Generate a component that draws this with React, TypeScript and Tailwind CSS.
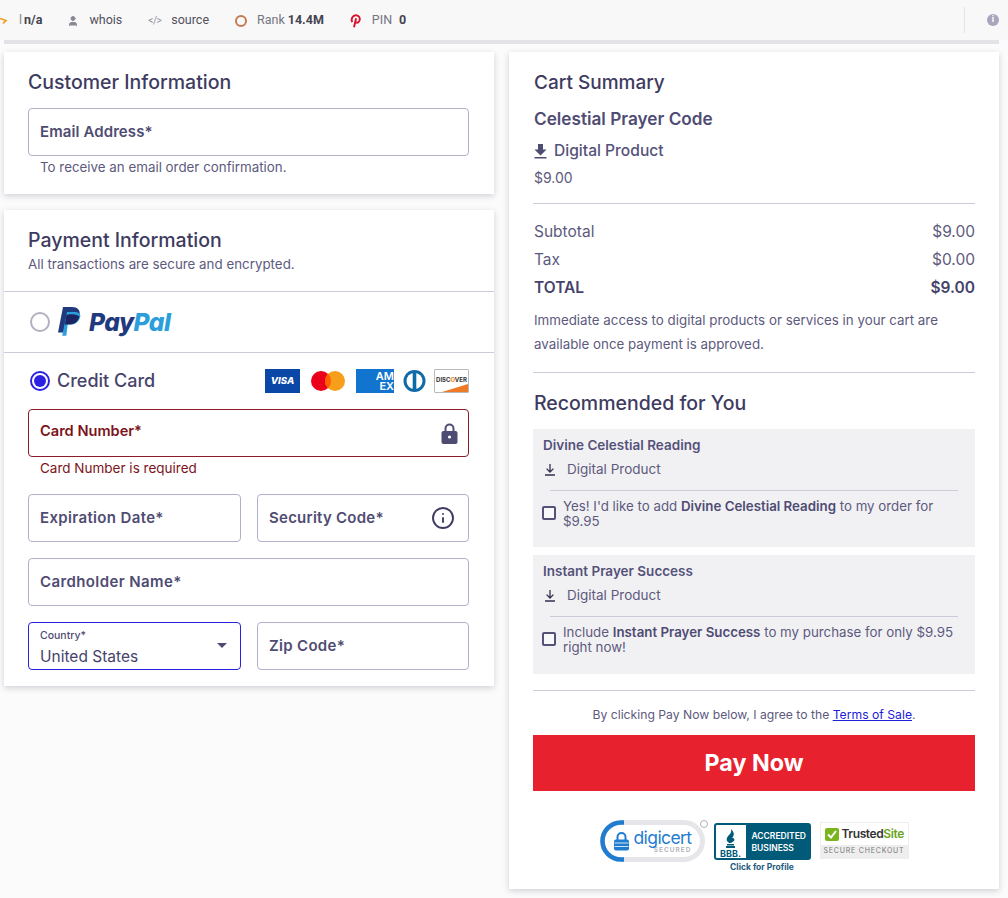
import React from "react";
import { Info, User } from "lucide-react";

const F = "font-['Inter','Noto_Sans',sans-serif]";

function Field({ label, className = "", labelClass = "tracking-[0.1px]", error = false, right }: { label: string; className?: string; labelClass?: string; error?: boolean; right?: React.ReactNode }) {
  return (
    <div className={`h-12 rounded-[4px] border flex items-center justify-between pl-[11px] pr-[11px] ${error ? "border-[#8a1c2b]" : "border-[#b3b1c9]"} ${className}`}>
      <span className={`font-semibold ${error ? "text-[14.600px] mb-[3px] text-[#7c1420]" : `text-[15px] text-[#4f4c73] ${labelClass}`}`}>{label}</span>
      {right}
    </div>
  );
}

function Divider({ className = "" }: { className?: string }) {
  return <div className={`h-px bg-[#cccbd8] ${className}`} />;
}

function Row({ label, value, bold = false }: { label: string; value: string; bold?: boolean }) {
  return (
    <div className={`h-7 flex items-center justify-between text-[15.500px] ${bold ? "font-semibold text-[#46436b]" : "text-[#5d5a7d]"}`}>
      <span>{label}</span>
      <span>{value}</span>
    </div>
  );
}

function Upsell({ name, children, className = "" }: { name: string; children: React.ReactNode; className?: string }) {
  return (
    <div className={`bg-[#f1f1f4] pt-[6px] ${className}`}>
      <div className="pl-[10px] h-[20px] flex items-center text-[13.500px] font-semibold text-[#55527a]">{name}</div>
      <div className="pl-[11px] mt-[2px] h-[24px] flex items-center gap-[11px] text-[13.500px] text-[#5d5a7d]">
        <DlThin />
        <span>Digital Product</span>
      </div>
      <Divider className="mx-[17px] mt-[9px]" />
      <div className="flex items-start pl-[9px] pr-[20px] mt-[8px]">
        <div className="mt-[7px] w-[14px] h-[14px] shrink-0 rounded-[2px] border-2 border-[#55527a] bg-[#f8f8fa]" />
        <p className="ml-[7px] text-[13.300px] leading-[15px] text-[#5d5a7d]">{children}</p>
      </div>
    </div>
  );
}

function DlThin() {
  return (
    <svg width="12" height="13" viewBox="0 0 12 13" fill="none" stroke="#33314f" strokeWidth="1.300">
      <path d="M6 1v7.500M2.600 5.600 6 9l3.400-3.400M1 12h10" />
    </svg>
  );
}

function PinIcon() {
  return (
    <svg width="13" height="14" viewBox="0 0 13 14" fill="none" stroke="#d9142a" strokeWidth="1.900">
      <path d="M3.200 8.200C1.600 5 3.700 1.300 6.800 1.300c2.700 0 4.300 1.900 4 4.200-.3 2.500-2.200 3.800-3.900 2.900M7.100 4.200 5 13.300" />
    </svg>
  );
}

function PayPalMark() {
  return (
    <svg width="24" height="29" viewBox="0 0 24 29">
      <path d="M6 0h9c5.500 0 8.500 3 7.600 8-.9 5.700-4.700 8.500-10 8.500H9l-1.500 9H1z" fill="#1f3a7d" />
      <path d="M10 5h7.500c3.500 0 5.800 1.600 5.900 4.200-1 5-4.400 8.300-9.700 8.300h-3L9.300 28.700H5.200z" fill="#2b9fdc" />
      <path d="M7.900 17.500 9.400 8c1.500-.8 5-1 8-.6 2 .3 3.700.9 5 1.900-1 5-4.700 8.200-9.700 8.200z" fill="#1c2561" />
    </svg>
  );
}

function Cards() {
  return (
    <div className="flex items-center">
      <div className="w-[35px] h-[24px] bg-[#0a47a6] flex items-center justify-center text-white text-[9.500px] font-extrabold italic">VISA</div>
      <svg width="34" height="20" viewBox="0 0 34 20" className="ml-[11px]">
        <circle cx="10" cy="10" r="10" fill="#eb001b" />
        <circle cx="24" cy="10" r="10" fill="#f79e1b" />
        <path d="M17 2.800a10 10 0 0 1 0 14.400 10 10 0 0 1 0-14.400z" fill="#ff5f00" />
      </svg>
      <div className="ml-[11px] w-[38px] h-[24px] bg-[#1174ce] flex flex-col items-end justify-center text-white text-[11px] leading-[10px] font-semibold">
        <span>AM</span>
        <span>EX</span>
      </div>
      <svg width="25" height="22" viewBox="0 0 25 22" className="ml-[8px]">
        <circle cx="12.500" cy="11" r="11" fill="#0f6aa8" />
        <circle cx="12.500" cy="11" r="8" fill="#fff" />
        <rect x="10.700" y="3" width="3.600" height="16" fill="#0f6aa8" />
      </svg>
      <div className="relative ml-[7px] w-[35px] h-[24px] rounded-[1px] border border-[#b9b9b9] bg-white overflow-hidden flex items-start justify-center">
        <span className="mt-[6px] text-[6px] leading-[8px] font-bold text-[#333]">DISC<span className="text-[#f08020]">O</span>VER</span>
        <div className="absolute right-0 bottom-0 w-[26px] h-[8px] bg-[#ee7a26] [clip-path:polygon(100%_0,100%_100%,0_100%)]" />
      </div>
    </div>
  );
}

function Badges() {
  return (
    <div className="flex items-start justify-center mt-[29px]">
      <div className="relative w-[105px] h-[42px] rounded-full border-[5px] border-[#e6e6ea] flex items-center">
        <svg className="absolute -left-[5px] -top-[5px]" width="30" height="42" viewBox="0 0 30 42" fill="none" stroke="#1f7ccf" strokeWidth="4.500">
          <path d="M24 2.500H21a18.500 18.500 0 0 0 0 37h3" />
        </svg>
        <svg className="ml-[8px]" width="17" height="20" viewBox="0 0 16 20">
          <path d="M4 9V6a4 4 0 0 1 8 0v3" fill="none" stroke="#1f7ccf" strokeWidth="2" />
          <rect x="0.500" y="8.500" width="15" height="11" rx="2" fill="#1f7ccf" />
          <path d="M1 12h14M1 15.500h14" stroke="#fff" strokeWidth="0.800" />
        </svg>
        <div className="ml-[4px] flex flex-col items-end">
          <span className="text-[17.500px] leading-[17px] text-[#1f7ccf] tracking-[-0.6px]">digicert</span>
          <span className="text-[6.500px] leading-[8px] tracking-[1px] text-[#b0b0b6] font-semibold">SECURED</span>
        </div>
        <div className="absolute -right-[8px] -top-[5px] w-[8px] h-[8px] rounded-full border border-[#b0b0b0]" />
      </div>
      <div className="ml-[9px] mt-[3px] flex flex-col items-center">
        <div className="w-[97px] h-[37px] rounded-[3px] bg-[#005a78] flex overflow-hidden">
          <div className="m-[1px] w-[32px] rounded-l-[2px] bg-white border border-[#005a78] flex flex-col items-center justify-end">
            <svg width="11" height="20" viewBox="0 0 11 20" fill="#005a78">
              <path d="M6 0c3 3 4 6 1 9 2-.5 3 1 2 3l-3 2H4L2 12c-1-3 1-5 3-7 1-1 1.500-3 1-5zM2 15h7v1.500H2zM1 17h9v2H1z" />
            </svg>
            <span className="text-[9px] leading-[9px] font-bold text-[#005a78]">BBB.</span>
          </div>
          <div className="flex-1 flex flex-col justify-center pl-[4px] text-white text-[8.500px] leading-[12px] font-semibold">
            <span>ACCREDITED</span>
            <span>BUSINESS</span>
          </div>
        </div>
        <span className="mt-[2px] text-[8.500px] leading-[11px] font-bold text-[#1d5b7e]">Click for Profile</span>
      </div>
      <div className="ml-[9px] mt-[2px] w-[89px] h-[37px] border border-[#eeeeee] bg-white flex flex-col">
        <div className="h-[22px] flex items-center pl-[4px] gap-[3px]">
          <div className="w-[14px] h-[13px] rounded-[2px] bg-[#7ab51d] flex items-center justify-center">
            <svg width="10" height="9" viewBox="0 0 10 9" fill="none" stroke="#fff" strokeWidth="2"><path d="M1 4.500 4 7.500 9 1" /></svg>
          </div>
          <span className="text-[12px] font-semibold tracking-[-0.4px] text-[#333]">Trusted<span className="text-[#6aa51b]">Site</span></span>
        </div>
        <div className="flex-1 bg-[#eeeeee] flex items-center justify-center text-[7px] tracking-[0.8px] text-[#777]">SECURE CHECKOUT</div>
      </div>
    </div>
  );
}

export default function App() {
  return (
    <div className={`w-[1008px] h-[898px] overflow-hidden bg-[#fbfbfb] ${F} text-[#3e3b60]`}>
      <header className="h-[40px] pt-[1px] bg-[#f8f8f9] flex items-center font-['Roboto',sans-serif] text-[12.500px] text-[#555] relative">
        <svg className="absolute left-0 top-[17px]" width="8" height="7" viewBox="0 0 8 7" fill="none" stroke="#f09a1a" strokeWidth="1.600"><path d="M0 1.500 6 3.500 3 6.500" /></svg>
        <span className="ml-[19px] text-[#888]">l</span>
        <span className="ml-[2px] font-bold text-[#44434f]">n/a</span>
        <User className="ml-[25px] text-[#8b8795] fill-[#8b8795]" size={12} />
        <span className="ml-[10px] text-[#50505c]">whois</span>
        <span className="ml-[26px] text-[#8f8f98] text-[10px] tracking-[-0.5px]">&lt;/&gt;</span>
        <span className="ml-[10px] text-[#50505c]">source</span>
        <span className="ml-[26px] w-[12px] h-[12px] rounded-full border-2 border-[#c67a4e]" />
        <span className="ml-[10px] text-[#75757f]">Rank</span>
        <span className="ml-[3px] font-bold text-[#44434f]">14.4M</span>
        <span className="ml-[25px]"><PinIcon /></span>
        <span className="ml-[10px] text-[#75757f]">PIN</span>
        <span className="ml-[7px] font-bold text-[#44434f]">0</span>
        <div className="ml-auto mr-[43px] w-px h-[26px] bg-[#e4e4e6] -translate-y-[1px]" />
        <div className="absolute right-[9px] top-[14px] w-[12px] h-[12px] rounded-full bg-[#a7a6bb] flex items-center justify-center text-white text-[9px] font-bold">i</div>
      </header>
      <div className="ml-[4px] mr-[9px] h-[4px] bg-[#e3e3e7]" />

      <main className="flex items-start gap-[15px] px-[4px] mt-[8px]">
        <div className="w-[490px] flex flex-col gap-[16px]">
          <section className="h-[142px] bg-white shadow-[0_2px_6px_rgba(60,60,90,0.22)] pl-[24px] pr-[25px] pt-[17px]">
            <h2 className="text-[19.500px] leading-[26px] font-medium text-[#3e3b60]">Customer Information</h2>
            <Field label="Email Address*" className="mt-[13px]" />
            <p className="ml-[12px] mt-[2px] text-[13.350px] leading-[18px] text-[#5d5a7d]">To receive an email order confirmation.</p>
          </section>

          <section className="h-[476px] bg-white shadow-[0_2px_6px_rgba(60,60,90,0.22)]">
            <div className="px-[24px] pt-[17px] h-[81px]">
              <h2 className="text-[19.500px] leading-[26px] font-medium text-[#3e3b60]">Payment Information</h2>
              <p className="mt-[1px] text-[13.350px] leading-[20px] text-[#5d5a7d]">All transactions are secure and encrypted.</p>
            </div>
            <Divider />
            <div className="h-[60px] flex items-center pl-[26px]">
              <div className="w-[20px] h-[20px] rounded-full border-2 border-[#b3b1c0]" />
              <div className="ml-[7px] -mt-[1px]"><PayPalMark /></div>
              <span className="ml-[8px] mt-[1px] text-[24.500px] font-extrabold italic tracking-[-0.5px] text-[#1f3a7d]">Pay<span className="text-[#2b9fdc]">Pal</span></span>
            </div>
            <Divider />
            <div className="pl-[24px] pr-[25px]">
              <div className="h-[56px] flex items-center justify-between">
                <div className="flex items-center pl-[2px] -mt-[1px]">
                  <div className="w-[20px] h-[20px] rounded-full border-2 border-[#2a22e0] flex items-center justify-center">
                    <div className="w-[12px] h-[12px] rounded-full bg-[#2a22e0]" />
                  </div>
                  <span className="ml-[7px] text-[18px] font-medium text-[#46436b]">Credit Card</span>
                </div>
                <Cards />
              </div>
              <Field
                label="Card Number*"
                error
                right={
                  <svg className="-mr-[1px]" width="17" height="21" viewBox="0 0 17 21">
                    <path d="M4.500 9V5.500a4 4 0 0 1 8 0V9" fill="none" stroke="#4f4c73" strokeWidth="2" />
                    <rect x="0.500" y="8" width="16" height="13" rx="2" fill="#4f4c73" />
                    <circle cx="8.500" cy="14" r="1.600" fill="#fff" />
                  </svg>
                }
              />
              <p className="ml-[12px] mt-[2px] text-[13.500px] leading-[19px] text-[#7c1420]">Card Number is required</p>
              <div className="flex gap-[16px] mt-[16px]">
                <Field label="Expiration Date*" labelClass="tracking-[0.35px]" className="w-[213px]" />
                <Field label="Security Code*" labelClass="tracking-[0.25px]" className="flex-1" right={<Info size={24} strokeWidth={1.900} className="text-[#3e3b60] mr-[2px]" />} />
              </div>
              <Field label="Cardholder Name*" labelClass="tracking-[0.4px]" className="mt-[16px]" />
              <div className="flex gap-[16px] mt-[16px]">
                <div className="w-[213px] h-12 rounded-[4px] border border-[#2a22e0] pl-[11px] pr-[13px] relative">
                  <div className="text-[10.500px] leading-[12px] mt-[7px] font-medium text-[#4f4c73]">Country*</div>
                  <div className="text-[15.500px] leading-[20px] mt-[5px] text-[#46436b]">United States</div>
                  <div className="absolute right-[13px] top-[20px] w-0 h-0 border-l-[5px] border-r-[5px] border-t-[5px] border-l-transparent border-r-transparent border-t-[#4f4c73]" />
                </div>
                <Field label="Zip Code*" labelClass="tracking-[0.3px]" className="flex-1" />
              </div>
            </div>
          </section>
        </div>

        <aside className="w-[490px] h-[837px] bg-white shadow-[0_2px_6px_rgba(60,60,90,0.22)] px-[24px] pt-[18px]">
          <h2 className="text-[19px] leading-[26px] font-medium text-[#3e3b60] pl-[1px]">Cart Summary</h2>
          <h3 className="mt-[11px] pl-[1px] text-[17.200px] leading-[24px] font-semibold text-[#4f4c73]">Celestial Prayer Code</h3>
          <div className="mt-[8px] pl-[1px] h-[24px] flex items-center gap-[7px] text-[15.600px] font-medium text-[#55527a]">
            <svg width="13" height="15" viewBox="0 0 13 15" fill="#4f4c73"><path d="M4 0h5v5.500h3.500L6.500 11.500.5 5.500H4zM.5 13h12v1.600H.5z" /></svg>
            <span>Digital Product</span>
          </div>
          <p className="mt-[5px] pl-[1px] text-[14px] leading-[20px] text-[#5d5a7d]">$9.00</p>
          <Divider className="mt-[15px]" />
          <div className="mt-[14px] pl-[1px]">
            <Row label="Subtotal" value="$9.00" />
            <Row label="Tax" value="$0.00" />
            <Row label="TOTAL" value="$9.00" bold />
          </div>
          <p className="mt-[6px] pl-[1px] text-[13.340px] leading-[24px] text-[#5d5a7d]">Immediate access to digital products or services in your cart are<br />available once payment is approved.</p>
          <Divider className="mt-[16px]" />
          <h2 className="mt-[17px] pl-[1px] text-[19.500px] leading-[26px] font-medium text-[#3e3b60]">Recommended for You</h2>
          <Upsell name="Divine Celestial Reading" className="mt-[13px] h-[118px]">
            Yes! I'd like to add <b className="font-semibold text-[#4f4c73]">Divine Celestial Reading</b> to my order for $9.95
          </Upsell>
          <Upsell name="Instant Prayer Success" className="mt-[8px] h-[119px]">
            Include <b className="font-semibold text-[#4f4c73]">Instant Prayer Success</b> to my purchase for only $9.95 right now!
          </Upsell>
          <Divider className="mt-[16px]" />
          <p className="mt-[15px] text-center text-[12.200px] leading-[18px] text-[#5d5a7d]">
            By clicking Pay Now below, I agree to the <span className="underline text-[#2020d8]">Terms of Sale</span>.
          </p>
          <div className="mt-[11px] h-[56px] bg-[#e8212e] flex items-center justify-center text-white text-[23.300px] font-bold">Pay Now</div>
          <Badges />
        </aside>
      </main>
    </div>
  );
}
